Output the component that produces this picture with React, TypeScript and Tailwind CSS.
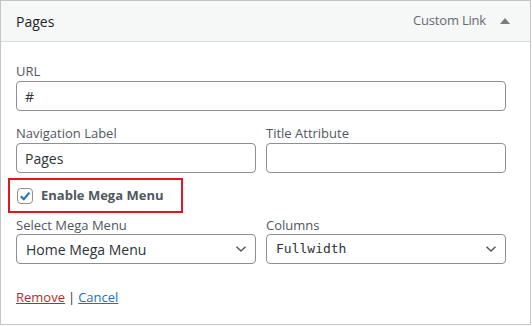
import React from "react";

function Chevron() {
  return (
    <svg width="12" height="8" viewBox="0 0 12 8" className="shrink-0">
      <path d="M1.5 1.8 L6 6 L10.5 1.8" fill="none" stroke="#50575e" strokeWidth="1.5" />
    </svg>
  );
}

function Field({ label, value }: { label: string; value?: string }) {
  return (
    <div className="flex flex-col">
      <label className="text-[13px] leading-[18px] text-[#50575e]">{label}</label>
      <div className="h-[30px] mt-[1px] rounded-[4px] border border-[#8c8f94] bg-white flex items-center px-[8px] text-[14px] text-[#2c3338]">
        {value}
      </div>
    </div>
  );
}

function Select({ label, value, mono }: { label: string; value: string; mono?: boolean }) {
  return (
    <div className="flex flex-col">
      <label className="text-[13px] leading-[18px] text-[#50575e]">{label}</label>
      <div className="h-[30px] rounded-[4px] border border-[#8c8f94] bg-white flex items-center justify-between pl-[9px] pr-[8px] text-[14px] text-[#2c3338]">
        <span className={mono ? "font-['DejaVu_Sans_Mono',monospace] text-[13px]" : ""}>{value}</span>
        <Chevron />
      </div>
    </div>
  );
}

export default function App() {
  return (
    <div className="w-[531px] h-[325px] border border-[#c3c4c7] bg-white flex flex-col font-['Open_Sans','Noto_Sans',Arial,sans-serif]">
      {/* header */}
      <div className="h-[41px] shrink-0 bg-[#f6f7f7] border-b border-[#dcdcde] flex items-center justify-between pl-[15px] pr-[20px]">
        <span className="text-[14px] text-[#1d2327]">Pages</span>
        <div className="flex items-center gap-[14px]">
          <span className="text-[13px] tracking-[-0.2px] text-[#646970]">Custom Link</span>
          <svg width="10" height="6" viewBox="0 0 10 6">
            <path d="M0 6 L5 0 L10 6 Z" fill="#787c82" />
          </svg>
        </div>
      </div>

      {/* body */}
      <div className="px-[15px] pt-[20px] flex flex-col">
        <div className="w-[490px]">
          <Field label="URL" value="#" />
        </div>

        <div className="grid grid-cols-2 gap-[10px] w-[490px] mt-[13px]">
          <Field label="Navigation Label" value="Pages" />
          <Field label="Title Attribute" />
        </div>

        <div className="-ml-[8px] mt-[5px] w-[175px] h-[35px] border-2 border-[#e3161d] flex items-center pl-[7px] gap-[8px]">
          <span className="w-[16px] h-[16px] rounded-[4px] border border-[#8c8f94] bg-white flex items-center justify-center">
            <svg width="12" height="12" viewBox="0 0 12 12">
              <path d="M1.8 6.2 L4.8 9.2 L10.4 2.6" fill="none" stroke="#2271b1" strokeWidth="2" />
            </svg>
          </span>
          <span className="text-[13px] font-bold text-[#50575e]">Enable Mega Menu</span>
        </div>

        <div className="grid grid-cols-2 gap-[10px] w-[490px] mt-[3px]">
          <Select label="Select Mega Menu" value="Home Mega Menu" />
          <Select label="Columns" value="Fullwidth" mono />
        </div>

        <div className="mt-[24px] text-[13px] flex items-center gap-[3px]">
          <a className="text-[#b32d2e] underline">Remove</a>
          <span className="text-[#2c3338]">|</span>
          <a className="text-[#2271b1] underline">Cancel</a>
        </div>
      </div>
    </div>
  );
}
